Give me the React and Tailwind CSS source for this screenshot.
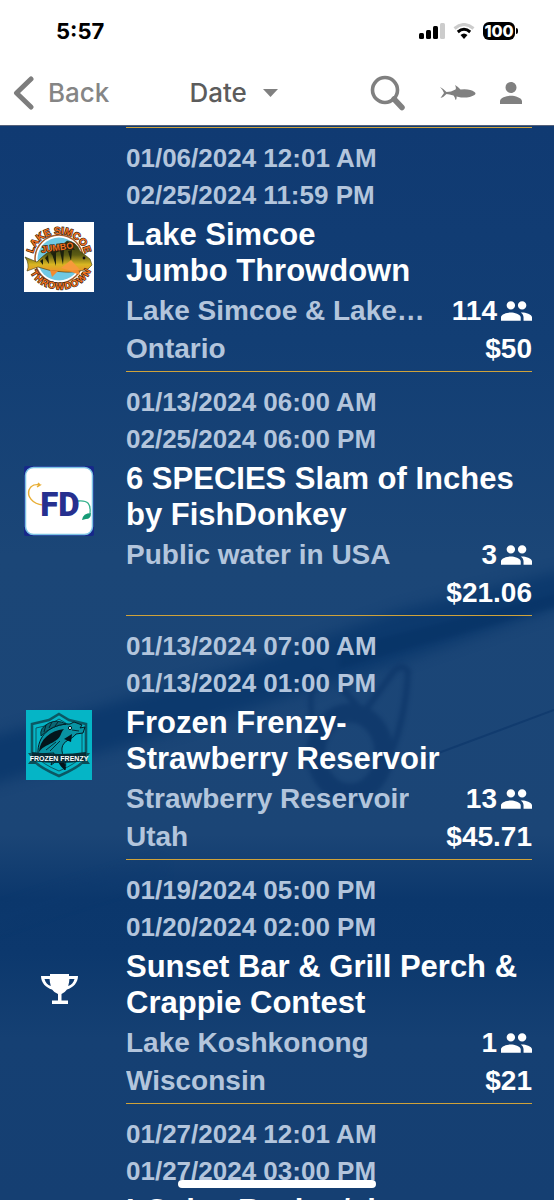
import React from "react";

function PeopleIcon() {
  return (
    <svg viewBox="1 5 22 14" className="h-5 w-[31px] shrink-0" fill="currentColor" aria-hidden="true">
      <path d="M16 11c1.66 0 2.99-1.34 2.99-3S17.66 5 16 5c-1.66 0-3 1.34-3 3s1.34 3 3 3zm-8 0c1.66 0 2.99-1.34 2.99-3S9.66 5 8 5C6.34 5 5 6.34 5 8s1.34 3 3 3zm0 2c-2.33 0-7 1.17-7 3.5V19h14v-2.5c0-2.33-4.67-3.5-7-3.5zm8 0c-.29 0-.62.02-.97.05 1.16.84 1.97 1.97 1.97 3.45V19h6v-2.5c0-2.33-4.67-3.5-7-3.5z" />
    </svg>
  );
}

function SimcoeLogo() {
  return (
    <svg viewBox="0 0 70 70" className="size-[70px]" role="img" aria-label="Lake Simcoe Jumbo Throwdown logo">
      <defs>
        <path id="simcoe-top" d="M9 35 A26 23 0 0 1 61 35" />
        <path id="simcoe-bottom" d="M9 47 A28 22 0 0 0 64 45" />
        <linearGradient id="perch" x1="0" y1="0" x2="0" y2="1">
          <stop offset="0" stopColor="#2c3010" />
          <stop offset=".45" stopColor="#5d5d14" />
          <stop offset=".75" stopColor="#d8b622" />
          <stop offset="1" stopColor="#f0912a" />
        </linearGradient>
      </defs>
      <rect width="70" height="70" fill="#fff" />
      <circle cx="35" cy="37" r="24" fill="#fff" stroke="#a85c2a" strokeWidth="1.5" />
      <circle cx="35" cy="37" r="21.5" fill="#70c9e4" />
      <path d="M1 35 L13 40 Q25 27 36 25 L43 19 Q52 19 56 29 L66 37 L68 43 L64 47 Q50 51 40 50 Q27 50 14 45 L3 49 Q6 42 1 35Z" fill="url(#perch)" stroke="#3a3a12" strokeWidth=".6" />
      <path d="M26 30 Q36 21 47 23 L51 28 Q39 26 28 33Z" fill="#24260f" />
      <path d="M21 36 l3 -3 l1 9z M28 32 l4 -2 l0 14z M36 29 l4 -1 l-1 15z M44 29 l4 -1 l-1 11z M16 39 l3 -2 l0 6z" fill="#1c200c" />
      <path d="M37 46 L47 38 L56 48 L48 49Z" fill="#f79a3b" />
      <path d="M26 48 l8 1 l-6 6z M45 49 l9 -1 l2 5z" fill="#f58a2f" />
      <circle cx="60" cy="36" r="1.4" fill="#111" />
      <g fill="#f2731f" stroke="#2b1c10" strokeWidth="1.2" paintOrder="stroke" fontFamily="Liberation Sans, sans-serif" fontWeight="700">
        <text fontSize="10">
          <textPath href="#simcoe-top" startOffset="50%" textAnchor="middle">LAKE SIMCOE</textPath>
        </text>
        <text fontSize="9" x="17" y="29" transform="rotate(-8 30 27)">JUMBO</text>
        <text fontSize="9.5">
          <textPath href="#simcoe-bottom" startOffset="50%" textAnchor="middle" dominantBaseline="central">THROWDOWN</textPath>
        </text>
      </g>
    </svg>
  );
}

function DonkeyLogo() {
  return (
    <svg viewBox="0 0 70 70" className="size-[70px]" role="img" aria-label="FishDonkey logo">
      <rect width="70" height="70" rx="2" fill="#17288a" />
      <rect x="1.5" y="1.5" width="67" height="67" rx="8" fill="#fff" stroke="#7cc4e4" strokeWidth="1.5" />
      <path d="M19 39 C8 38 3 30 5 24 C7 19 12 18 16 19 L13 21 M16 19 L14 17" fill="none" stroke="#e8ae35" strokeWidth="1.5" />
      <path d="M54 35 C64 34 67 38 66 47" fill="none" stroke="#35b18c" strokeWidth="1.3" />
      <path d="M67 47 Q59 47 58 54 L62 53 Q67 53 67 47Z" fill="#169b76" />
      <text x="36" y="50" textAnchor="middle" fontFamily="Roboto, sans-serif" fontWeight="900" fontSize="33" fill="#26308f">FD</text>
    </svg>
  );
}

function FrenzyLogo() {
  return (
    <svg viewBox="0 0 66 70" className="h-[70px] w-[66px]" role="img" aria-label="Frozen Frenzy logo">
      <rect width="66" height="70" fill="#05b5c6" />
      <path d="M33 4 L43 10 L60 14 V48 Q56 56 33 66 Q10 56 6 48 V14 L23 10Z" fill="none" stroke="#0b5864" strokeWidth="2.6" />
      <path d="M33 9 L43 15 L56 18 V46 Q50 54 33 61 Q16 54 10 46 V18 L23 15Z" fill="none" stroke="#0b5864" strokeWidth="1" />
      <path d="M12 44 C11 26 24 14 44 14 L48 12 L56 15 L54 18 L59 17 L57 23 L50 24 C46 30 37 30 36 38 C35 46 42 50 39 60 L32 50 L25 55 L28 43Z" fill="#0893a3" stroke="#031c24" strokeWidth="1" />
      <path d="M13 42 C14 29 24 21 38 19 C34 23 36 27 29 31 C23 35 17 36 13 42Z" fill="#03141b" />
      <path d="M15 26 Q13 18 23 13 Q31 9 40 14 Q26 15 15 26Z" fill="#0a6875" stroke="#03141b" strokeWidth=".8" />
      <path d="M18 22 L20 15 M23 18 L26 12 M29 16 L32 12 M20 40 L30 32 M24 41 L34 31 M46 20 L53 21" stroke="#03141b" strokeWidth=".8" />
      <path d="M34 45 Q40 50 39 60 Q34 57 31 49Z M38 29 L46 24 L45 32Z" fill="#03141b" />
      <circle cx="44" cy="18" r="1.6" fill="#dff" stroke="#03141b" />
      <path d="M2 43 H10 V54 H2 L6 48.5Z M64 43 H56 V54 H64 L60 48.5Z" fill="#0b4d58" />
      <path d="M6 42 Q33 46 60 42 V51 Q33 55 6 51Z" fill="#062c36" />
      <text x="33" y="51" textAnchor="middle" fontFamily="Liberation Sans, sans-serif" fontWeight="700" fontSize="7" fill="#fff">FROZEN FRENZY</text>
    </svg>
  );
}

function TrophyIcon() {
  return (
    <svg viewBox="0 0 37 30" className="h-[30px] w-[37px]" fill="currentColor" role="img" aria-label="Trophy">
      <path fillRule="evenodd" d="M9 0 H28 V2 H37 C37 9 32 13.500 26 15.500 Q23.500 19 20.500 20 V26.500 H27 V30 H11 V26.500 H17 V20 Q13.500 19 11 15.500 C5 13.500 0 9 0 2 H9Z M3.500 5 C4.500 8.500 6.500 11 9.800 12 Q8.600 8 8.600 5Z M33.500 5 H28.400 Q28.400 8 27.200 12 C30.500 11 32.500 8.500 33.500 5Z" />
    </svg>
  );
}

// Blurred fishing rod and line guide behind the list
function RodBackdrop() {
  return (
    <svg viewBox="0 0 554 1074" preserveAspectRatio="none" className="absolute inset-0 h-full w-full" aria-hidden="true">
      <defs>
        <linearGradient id="water" x1="0" y1="0" x2="0" y2="1">
          <stop offset="0" stopColor="#103a72" />
          <stop offset=".2" stopColor="#123e74" />
          <stop offset=".4" stopColor="#1b4677" />
          <stop offset=".66" stopColor="#1b4576" />
          <stop offset=".72" stopColor="#0b376c" />
          <stop offset=".77" stopColor="#0c386d" />
          <stop offset=".85" stopColor="#154073" />
          <stop offset="1" stopColor="#153f72" />
        </linearGradient>
        <filter id="soft" x="-10%" y="-30%" width="120%" height="160%" colorInterpolationFilters="sRGB"><feGaussianBlur stdDeviation="7" /></filter>
        <filter id="mild" x="-10%" y="-10%" width="120%" height="120%" colorInterpolationFilters="sRGB"><feGaussianBlur stdDeviation="2" /></filter>
      </defs>
      <rect width="554" height="1074" fill="url(#water)" />
      <path d="M-20 614 L240 540 L400 484 L580 440 V474 L400 536 L240 586 L-20 662Z" fill="#07356a" opacity=".75" filter="url(#soft)" />
      <path d="M340 522 L580 462 V474 L340 542Z" fill="#063265" opacity=".55" filter="url(#mild)" />
      <g fill="none" stroke="#0d3669" opacity=".75" filter="url(#mild)">
        <ellipse cx="350" cy="627" rx="34" ry="40" strokeWidth="19" />
        <path d="M314 600 Q306 570 318 545" strokeWidth="5" />
        <path d="M340 560 L378 604 M365 585 L394 545 Q402 537 408 545 Q406 590 390 630" strokeWidth="6" />
      </g>
      <path d="M425 632 L554 584" stroke="#0d376b" strokeWidth="2" opacity=".7" />
      <path d="M-20 800 Q60 770 160 742" stroke="#0e3a6f" strokeWidth="10" fill="none" opacity=".5" filter="url(#soft)" />
    </svg>
  );
}

const tournaments = [
  { start: "01/06/2024 12:01 AM", end: "02/25/2024 11:59 PM", title: ["Lake Simcoe", "Jumbo Throwdown"], place: "Lake Simcoe & Lake Couchiching", region: "Ontario", anglers: 114, fee: "$50", Logo: SimcoeLogo },
  { start: "01/13/2024 06:00 AM", end: "02/25/2024 06:00 PM", title: ["6 SPECIES Slam of Inches", "by FishDonkey"], place: "Public water in USA", region: "", anglers: 3, fee: "$21.06", Logo: DonkeyLogo },
  { start: "01/13/2024 07:00 AM", end: "01/13/2024 01:00 PM", title: ["Frozen Frenzy-", "Strawberry Reservoir"], place: "Strawberry Reservoir", region: "Utah", anglers: 13, fee: "$45.71", Logo: FrenzyLogo },
  { start: "01/19/2024 05:00 PM", end: "01/20/2024 02:00 PM", title: ["Sunset Bar & Grill Perch &", "Crappie Contest"], place: "Lake Koshkonong", region: "Wisconsin", anglers: 1, fee: "$21", Logo: TrophyIcon },
  { start: "01/27/2024 12:01 AM", end: "01/27/2024 03:00 PM", title: ["LColes Racing/al"] },
];

function TournamentRow({ item }) {
  const { Logo } = item;
  return (
    <li className="flex pr-[22px]">
      <div className="w-[126px] shrink-0 pt-[94px] pr-2">
        {Logo && <div className="flex h-[70px] w-[118px] items-center justify-center"><Logo /></div>}
      </div>
      <article className="min-w-0 flex-1 border-b border-[#cfa23a] pt-3 pb-[3px]">
        <p className="text-[26px] leading-[37px] whitespace-nowrap text-[#b3c5dc]">{item.start}</p>
        <p className="text-[26px] leading-[37px] whitespace-nowrap text-[#b3c5dc]">{item.end}</p>
        <h2 className="py-[3px] text-[31px] leading-9 whitespace-nowrap text-white">
          {item.title.map((line) => <span key={line} className="block">{line}</span>)}
        </h2>
        {item.fee && (
          <>
            <div className="flex h-[38px] items-center justify-between gap-6 text-[28px]">
              <span className="truncate text-[#b3c5dc]">{item.place}</span>
              <span className="flex shrink-0 items-center gap-1 text-white">{item.anglers}<PeopleIcon /></span>
            </div>
            <div className="flex h-[38px] items-center justify-between gap-6 text-[28px]">
              <span className="truncate text-[#b3c5dc]">{item.region}</span>
              <span className="text-white">{item.fee}</span>
            </div>
          </>
        )}
      </article>
    </li>
  );
}

function StatusBar() {
  return (
    <div className="flex h-[62px] items-center justify-between pr-9 pl-14 text-black">
      <span className="text-[22px] leading-6 font-bold">5:57</span>
      <div className="flex items-center gap-2">
        <svg viewBox="0 0 26 16" className="h-4 w-[26px]" aria-hidden="true">
          <rect x="0" y="10" width="5" height="6" rx="1.500" />
          <rect x="7" y="7" width="5" height="9" rx="1.500" />
          <rect x="14" y="3" width="5" height="13" rx="1.500" />
          <rect x="21" y="0" width="5" height="16" rx="1.500" fill="#ccc" />
        </svg>
        <svg viewBox="0 0 22 16" className="h-4 w-[22px]" fill="none" aria-hidden="true">
          <path d="M1.500 5.500 Q11 -2.500 20.500 5.500" stroke="#ccc" strokeWidth="3" />
          <path d="M4.800 9 Q11 3.600 17.200 9" stroke="#000" strokeWidth="3" />
          <path d="M7.500 12 Q11 9 14.500 12 L11 16Z" fill="#000" />
        </svg>
        <span className="flex items-center gap-px">
          <span className="flex h-[18px] w-8 items-center justify-center rounded-md bg-black text-base leading-[18px] font-extrabold text-white">100</span>
          <span className="h-1.5 w-0.5 rounded-r bg-black" />
        </span>
      </div>
    </div>
  );
}

export default function App() {
  return (
    <div className="relative flex h-screen flex-col overflow-hidden bg-[#113b72] font-['Liberation_Sans',Arial,sans-serif] font-bold">
      <header className="shrink-0 border-b border-[#55617a] bg-white font-['Inter',sans-serif]">
        <StatusBar />
        <nav className="flex h-[63px] items-center pr-8 pb-0.5 pl-3 text-[26px] font-medium text-gray-500">
          <button type="button" className="flex items-center gap-3.5 text-[#858585]">
            <svg viewBox="0 0 22 34" className="h-[34px] w-[22px]" fill="none" stroke="#7d7d7d" strokeWidth="5" strokeLinecap="round" strokeLinejoin="round" aria-hidden="true">
              <path d="M19 3 L4.500 17 L19 31" />
            </svg>
            <span>Back</span>
          </button>
          <label className="relative ml-20 flex items-center text-[#5c5c5c]">
            <span className="sr-only">Sort by</span>
            <select className="w-[89px] appearance-none bg-transparent text-[26px] leading-8" defaultValue="Date">
              <option>Date</option>
              <option>Name</option>
            </select>
            <svg viewBox="0 0 15 8" className="pointer-events-none absolute right-0 h-2 w-[15px]" fill="#808080" aria-hidden="true"><path d="M0 0H15L7.500 8Z" /></svg>
          </label>
          <div className="ml-auto flex items-center">
            <button type="button" aria-label="Search">
              <svg viewBox="0 0 36 36" className="size-9" fill="none" stroke="#808080" aria-hidden="true">
                <circle cx="15" cy="15" r="12.500" strokeWidth="3.600" />
                <path d="M24 24 L32 32.500" strokeWidth="5.500" strokeLinecap="round" />
              </svg>
            </button>
            <button type="button" aria-label="Catches" className="ml-[34px]">
              <svg viewBox="0 0 36 16" className="h-4 w-9" fill="#808080" aria-hidden="true">
                <path d="M0 2 Q4 4 6.500 7 Q11 7 15.500 4.500 Q16.500 3 15 0 Q18.500 2 20.500 4.500 Q30 3.500 34.500 7 Q36.500 8.500 34.500 10 Q30 13 21 12.500 L16.500 11.500 Q17 14 15.500 15 Q15 12 13.500 10.500 Q9 9 6.500 9 Q4 12 .5 13 Q2.500 10 4 8 Q3 5 0 2Z" />
              </svg>
            </button>
            <button type="button" aria-label="Profile" className="ml-6">
              <svg viewBox="4 4 16 16" className="size-[22px]" fill="#808080" aria-hidden="true">
                <path d="M12 12c2.210 0 4-1.790 4-4s-1.790-4-4-4-4 1.790-4 4 1.790 4 4 4zm0 2c-2.670 0-8 1.340-8 4v2h16v-2c0-2.660-5.330-4-8-4z" />
              </svg>
            </button>
          </div>
        </nav>
      </header>
      <main className="relative min-h-0 flex-1 overflow-hidden">
        <RodBackdrop />
        <div className="relative h-full overflow-y-auto pt-px text-white [scrollbar-width:none]">
          <div className="mr-[22px] ml-[126px] h-px bg-[#cfa23a]" />
          <ul>
            {tournaments.map((item) => <TournamentRow key={item.start} item={item} />)}
          </ul>
        </div>
      </main>
      <div className="absolute bottom-3 left-1/2 h-2 w-[198px] -translate-x-1/2 rounded-full bg-white" />
    </div>
  );
}
